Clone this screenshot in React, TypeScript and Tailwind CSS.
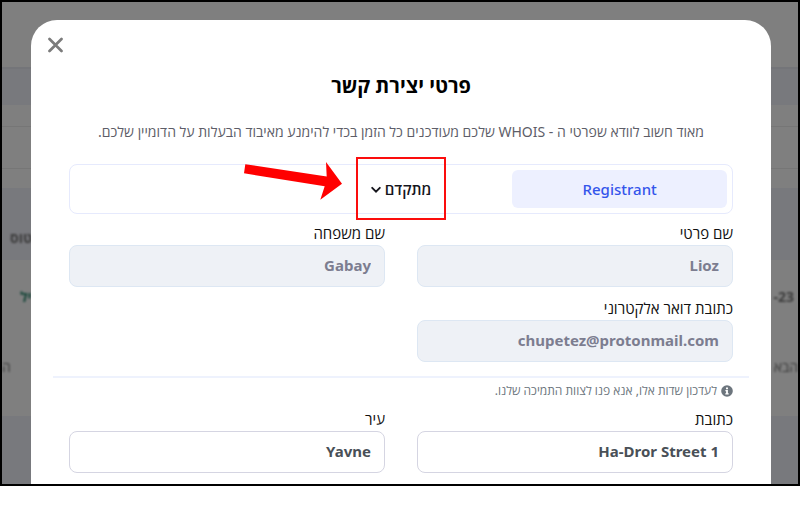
import { useState } from 'react';
import type { ReactNode } from 'react';

interface FieldProps {
  id: string;
  label: string;
  value: string;
  disabled?: boolean;
}

function Field({ id, label, value, disabled }: FieldProps) {
  const [text, setText] = useState(value);

  return (
    <div className="flex flex-col">
      <label htmlFor={id} className="text-[15px] leading-4 pb-1 text-[#111111]">
        {label}
      </label>
      <input
        id={id}
        type="text"
        value={text}
        disabled={disabled}
        onChange={(e) => setText(e.target.value)}
        className="h-[42px] w-full rounded-lg border border-[#d5d5e2] bg-white px-[13px] pb-0.5 text-[15px] font-bold text-[#495057] outline-none disabled:border-[#dde7f3] disabled:bg-[#eef1f6] disabled:text-[#7c7d90]"
      />
    </div>
  );
}

function Band({ className, children }: { className: string; children?: ReactNode }) {
  return <div className={`flex items-center justify-between ${className}`}>{children}</div>;
}

// Blurred account page that sits behind the dialog
function Backdrop() {
  return (
    <div
      dir="ltr"
      aria-hidden="true"
      className="absolute inset-0 flex flex-col overflow-hidden bg-white text-sm text-[#777777]"
    >
      <Band className="h-[65px]" />
      <Band className="h-[38px] border-t-2 border-[#e9eaf2] bg-[#f1f2fb]" />
      <Band className="h-[22px] border-b border-[#ededed]" />
      <Band className="h-[42px] border-b border-[#ededed]" />
      <Band className="h-[19px]" />
      <Band className="h-[72px] bg-[#f1f2fb] pt-7 pl-2 font-bold">
        <span className="blur-[1px]">סטטוס</span>
      </Band>
      <Band className="h-[74px] pl-[18px]">
        <span className="blur-[1px] text-[#2a8a70] font-bold">יל</span>
        <span className="blur-[1px] pr-1 font-bold">-23</span>
      </Band>
      <Band className="h-[82px] pb-4">
        <span className="blur-[1px]">ה</span>
        <span className="blur-[1px]">הבא</span>
      </Band>
      <Band className="flex-1 bg-[#f1f2fb]" />
      <div className="absolute inset-0 bg-black/50" />
    </div>
  );
}

export default function App() {
  const [tab, setTab] = useState('registrant');

  return (
    <div
      dir="rtl"
      className="relative overflow-hidden border-2 border-black font-['Noto_Sans','Open_Sans',sans-serif]"
    >
      <Backdrop />

      <div
        role="dialog"
        aria-labelledby="dialog-title"
        className="relative ml-[29px] mr-[27px] mt-[18px] rounded-t-[26px] bg-white px-[38px] pb-[11px]"
      >
        <button type="button" aria-label="סגירה" className="absolute left-4 top-[17px]">
          <svg className="w-4 h-4 text-[#7b7b7b]" viewBox="0 0 16 16" fill="none">
            <path d="M2.5 2l12 12M14.5 2L2.5 14" stroke="currentColor" strokeWidth="2.7" strokeLinecap="round" />
          </svg>
        </button>

        <h2 id="dialog-title" className="pt-[52px] text-center text-xl leading-7 font-bold text-black">
          פרטי יצירת קשר
        </h2>
        <p className="pt-[22px] text-center text-sm leading-5 text-[#5d5d68]">
          מאוד חשוב לוודא שפרטי ה - WHOIS שלכם מעודכנים כל הזמן בכדי להימנע מאיבוד הבעלות על הדומיין שלכם.
        </p>

        {/* Tabs */}
        <div className="mt-[22px] grid grid-cols-3 gap-1 rounded-lg border border-[#e6eafd] p-[5px]">
          <button
            type="button"
            onClick={() => setTab('registrant')}
            aria-pressed={tab === 'registrant'}
            className="h-[38px] rounded-md bg-[#edf0ff] text-[15px] font-medium text-[#3455eb]"
          >
            Registrant
          </button>
          <div className="relative flex justify-center">
            <button
              type="button"
              onClick={() => setTab('advanced')}
              aria-pressed={tab === 'advanced'}
              className="flex items-center gap-1 text-[15px] font-semibold text-[#16161d]"
            >
              מתקדם
              <svg className="w-[10px] h-[10px]" viewBox="0 0 10 10" fill="none">
                <path d="M1.2 3.8L5 7.6l3.8-3.8" stroke="currentColor" strokeWidth="1.9" strokeLinecap="round" />
              </svg>
            </button>
            {/* Highlight */}
            <div className="pointer-events-none absolute -top-[13px] left-1/2 h-[63px] w-[90px] -translate-x-1/2 border-2 border-[#fb0d0d]" />
            <svg
              className="pointer-events-none absolute -top-2 right-1/2 mr-[59px] h-[38px] w-[98px]"
              viewBox="0 0 98 38"
              fill="#ff0000"
            >
              <path d="M1.3 2.2L82.7 14.6L82 0L98 21.7L76.3 37.7L80.7 24.3L0 11.3Z" />
            </svg>
          </div>
        </div>

        <form className="grid grid-cols-2 gap-x-8 pt-[11px]">
          <Field id="first-name" label="שם פרטי" value="Lioz" disabled />
          <Field id="last-name" label="שם משפחה" value="Gabay" disabled />
          <div className="pt-[13px]">
            <Field id="email" label="כתובת דואר אלקטרוני" value="chupetez@protonmail.com" disabled />
          </div>

          <hr className="col-span-2 -mx-4 mt-[14px] border-t-2 border-[#eef2fd]" />
          <p className="col-span-2 flex items-center gap-1 pt-[5px] text-xs leading-4 text-[#6c757d]">
            <svg className="w-3 h-3" viewBox="0 0 12 12">
              <circle cx="6" cy="6" r="5.8" fill="currentColor" />
              <path d="M5 2.4h2v1.8H5zM4.4 5h2.5v3.2h.8v1.3H4.3V8.2h.8V6.2h-.7z" fill="#ffffff" />
            </svg>
            לעדכון שדות אלו, אנא פנו לצוות התמיכה שלנו.
          </p>

          <div className="pt-3">
            <Field id="address" label="כתובת" value="Ha-Dror Street 1" />
          </div>
          <div className="pt-3">
            <Field id="city" label="עיר" value="Yavne" />
          </div>
        </form>
      </div>
    </div>
  );
}
